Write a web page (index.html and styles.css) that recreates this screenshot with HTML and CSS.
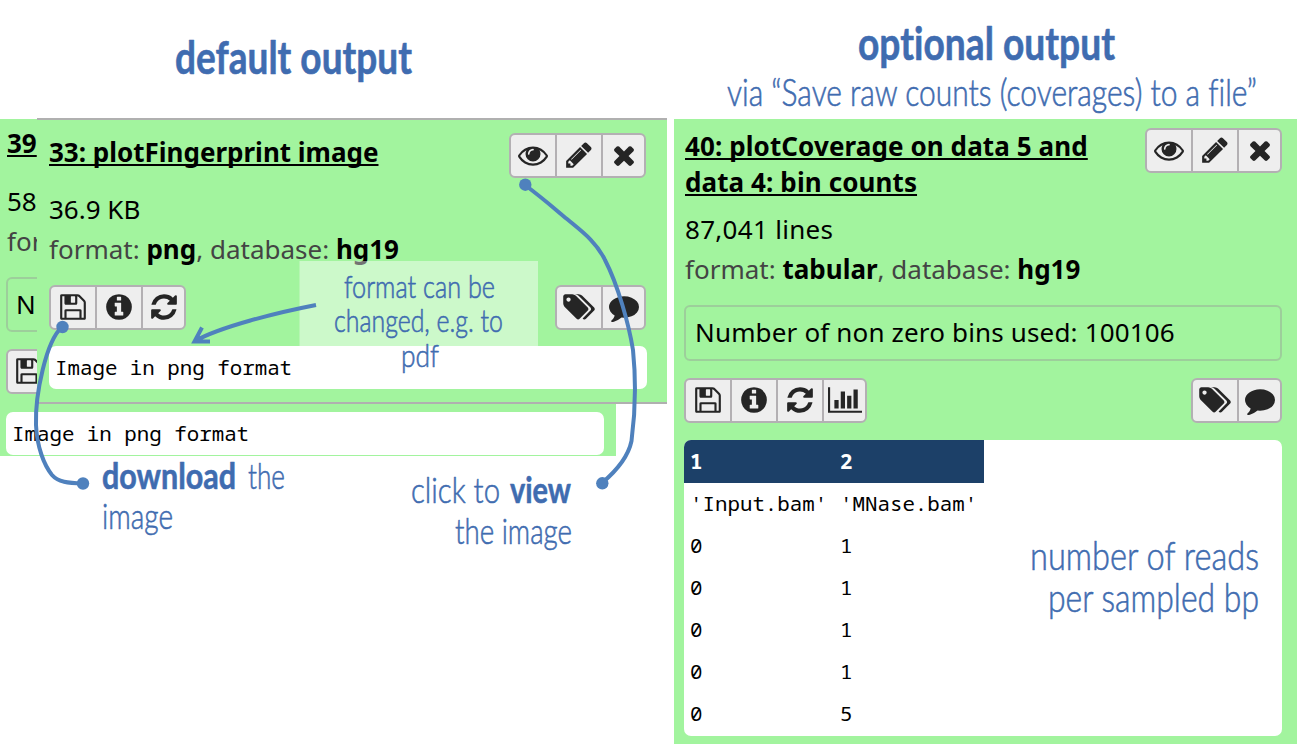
FILE: index.html
```
<!DOCTYPE html>
<html lang="en">
<head>
<meta charset="utf-8">
<title>Galaxy output</title>
<link rel="stylesheet" href="styles.css">
</head>
<body>
<svg class="defs" aria-hidden="true">
  <symbol id="eye" viewBox="0 0 1792 1792"><path d="M1664 960q-152-236-381-353 61 104 61 225 0 185-131.500 316.500t-316.500 131.500-316.500-131.500-131.500-316.500q0-121 61-225-229 117-381 353 133 205 333.500 326.500t434.500 121.500 434.500-121.500 333.500-326.500zm-720-384q0-20-14-34t-34-14q-125 0-214.500 89.500t-89.500 214.500q0 20 14 34t34 14 34-14 14-34q0-86 61-147t147-61q20 0 34-14t14-34zm848 384q0 34-20 69-140 230-376.500 368.500t-499.500 138.500-499.500-139-376.500-368q-20-35-20-69t20-69q140-229 376.500-368t499.500-139 499.500 139 376.500 368q20 35 20 69z"/></symbol>
  <symbol id="pencil" viewBox="0 0 1792 1792"><path d="M491 1536l91-91-235-235-91 91v107h128v128h107zm523-928q0-22-22-22-10 0-17 7l-542 542q-7 7-7 17 0 22 22 22 10 0 17-7l542-542q7-7 7-17zm-54-192l416 416-832 832h-416v-416zm683 96q0 53-37 90l-166 166-416-416 166-165q36-38 90-38 53 0 91 38l235 234q37 39 37 91z"/></symbol>
  <symbol id="times" viewBox="0 0 1792 1792"><path d="M1490 1322q0 40-28 68l-136 136q-28 28-68 28t-68-28l-294-294-294 294q-28 28-68 28t-68-28l-136-136q-28-28-28-68t28-68l294-294-294-294q-28-28-28-68t28-68l136-136q28-28 68-28t68 28l294 294 294-294q28-28 68-28t68 28l136 136q28 28 28 68t-28 68l-294 294 294 294q28 28 28 68z"/></symbol>
  <symbol id="save" viewBox="0 0 1792 1792"><path d="M512 1536h768v-384h-768v384zm896 0h128v-896q0-14-10-38.500t-20-34.500l-281-281q-10-10-34-20t-39-10v416q0 40-28 68t-68 28h-576q-40 0-68-28t-28-68v-416h-128v1280h128v-416q0-40 28-68t68-28h832q40 0 68 28t28 68v416zm-384-928v-320q0-13-9.500-22.500t-22.500-9.500h-192q-13 0-22.500 9.500t-9.500 22.500v320q0 13 9.500 22.500t22.500 9.500h192q13 0 22.500-9.500t9.500-22.500zm640 32v928q0 40-28 68t-68 28h-1344q-40 0-68-28t-28-68v-1344q0-40 28-68t68-28h928q40 0 88 20t76 48l280 280q28 28 48 76t20 88z"/></symbol>
  <symbol id="info" viewBox="0 0 1792 1792"><path d="M1152 1376v-160q0-14-9-23t-23-9h-96v-512q0-14-9-23t-23-9h-320q-14 0-23 9t-9 23v160q0 14 9 23t23 9h96v320h-96q-14 0-23 9t-9 23v160q0 14 9 23t23 9h448q14 0 23-9t9-23zm-128-896v-160q0-14-9-23t-23-9h-192q-14 0-23 9t-9 23v160q0 14 9 23t23 9h192q14 0 23-9t9-23zm640 416q0 209-103 385.500t-279.500 279.500-385.500 103-385.500-103-279.500-279.500-103-385.500 103-385.500 279.500-279.500 385.500-103 385.500 103 279.500 279.500 103 385.500z"/></symbol>
  <symbol id="refresh" viewBox="0 0 1792 1792"><path d="M1639 1056q0 5-1 7-64 268-268 434.500t-478 166.500q-146 0-282.500-55t-243.500-157l-129 129q-19 19-45 19t-45-19-19-45v-448q0-26 19-45t45-19h448q26 0 45 19t19 45-19 45l-137 137q71 66 161 102t187 36q134 0 250-65t186-179q11-17 53-117 8-23 30-23h192q13 0 22.500 9.500t9.500 22.500zm25-800v448q0 26-19 45t-45 19h-448q-26 0-45-19t-19-45 19-45l138-138q-148-137-349-137-134 0-250 65t-186 179q-11 17-53 117-8 23-30 23h-199q-13 0-22.500-9.500t-9.500-22.500v-7q65-268 270-434.500t480-166.500q146 0 284 55.500t245 156.500l130-129q19-19 45-19t45 19 19 45z"/></symbol>
  <symbol id="chart" viewBox="0 0 2048 1792"><path d="M640 896v512h-256v-512h256zm384-512v1024h-256v-1024h256zm1024 1152v128h-2048v-1536h128v1408h1920zm-640-896v768h-256v-768h256zm384-384v1152h-256v-1152h256z"/></symbol>
  <symbol id="tags" viewBox="54 0 2048 1792"><path d="M576 448q0-53-37.500-90.500t-90.500-37.500-90.500 37.500-37.500 90.500 37.500 90.500 90.500 37.500 90.500-37.500 37.500-90.500zm1067 576q0 53-37 90l-491 492q-39 37-91 37-53 0-90-37l-715-716q-38-37-64.500-101t-26.500-117v-416q0-52 38-90t90-38h416q53 0 117 26.500t102 64.500l715 714q37 39 37 91zm384 0q0 53-37 90l-491 492q-39 37-91 37-36 0-59-14t-53-45l470-470q37-37 37-90 0-52-37-91l-715-714q-38-38-102-64.500t-117-26.500h224q53 0 117 26.500t102 64.500l715 714q37 39 37 91z"/></symbol>
  <symbol id="comment" viewBox="0 0 1792 1792"><path d="M1792 896q0 174-120 321.500t-326 233-450 85.500q-70 0-145-8-198 175-460 242-49 14-114 22-17 2-30.500-9t-17.500-29v-1q-3-4-.5-12t2-10 4.500-9.500l6-9 7-8.500 8-9q7-8 31-34.500t34.500-38 31-39.500 32.500-51 27-59 26-76q-157-89-247.500-220t-90.500-281q0-130 71-248.500t191-204.500 286-136.500 348-50.500q244 0 450 85.500t326 233 120 321.500z"/></symbol>
</svg>

<main class="stage">
  <section class="column">
    <header class="heading">
      <svg class="note" width="667" height="118"><text class="strong" x="175" y="73.500" font-size="46" textLength="237" lengthAdjust="spacingAndGlyphs">default output</text></svg>
    </header>
    <div class="stack">
      <article class="card back">
        <h2 class="title">39</h2>
        <p class="line size">58</p>
        <p class="line meta">for</p>
        <div class="peek">N</div>
        <div class="tools">
          <div class="group"><span class="btn"><svg class="icon"><use href="#save"/></svg></span></div>
        </div>
        <pre class="output">Image in png format</pre>
      </article>
      <article class="card front">
        <div class="top">
          <h2 class="title">33: plotFingerprint image</h2>
          <div class="group">
            <span class="btn"><svg class="icon"><use href="#eye"/></svg></span>
            <span class="btn"><svg class="icon"><use href="#pencil"/></svg></span>
            <span class="btn"><svg class="icon"><use href="#times"/></svg></span>
          </div>
        </div>
        <p class="line size">36.9 KB</p>
        <p class="line meta">format: <b>png</b>, database: <b>hg19</b></p>
        <div class="tools">
          <div class="group">
            <span class="btn"><svg class="icon"><use href="#save"/></svg></span>
            <span class="btn"><svg class="icon"><use href="#info"/></svg></span>
            <span class="btn"><svg class="icon"><use href="#refresh"/></svg></span>
          </div>
          <div class="group">
            <span class="btn"><svg class="icon wide"><use href="#tags"/></svg></span>
            <span class="btn"><svg class="icon"><use href="#comment"/></svg></span>
          </div>
        </div>
        <pre class="output">Image in png format</pre>
      </article>
    </div>
  </section>

  <section class="column">
    <header class="heading">
      <svg class="note" width="623" height="119">
        <text class="strong" x="184" y="60" font-size="46" textLength="257" lengthAdjust="spacingAndGlyphs">optional output</text>
        <text x="53" y="106" font-size="37" textLength="530" lengthAdjust="spacingAndGlyphs">via “Save raw counts (coverages) to a file”</text>
      </svg>
    </header>
    <article class="card main">
      <div class="top">
        <h2 class="title spaced">40: plotCoverage on data 5 and<br>data 4: bin counts</h2>
        <div class="group">
          <span class="btn"><svg class="icon"><use href="#eye"/></svg></span>
          <span class="btn"><svg class="icon"><use href="#pencil"/></svg></span>
          <span class="btn"><svg class="icon"><use href="#times"/></svg></span>
        </div>
      </div>
      <p class="line size count">87,041 lines</p>
      <p class="line meta">format: <b>tabular</b>, database: <b>hg19</b></p>
      <div class="info">Number of non zero bins used: 100106</div>
      <div class="tools">
        <div class="group">
          <span class="btn"><svg class="icon"><use href="#save"/></svg></span>
          <span class="btn"><svg class="icon"><use href="#info"/></svg></span>
          <span class="btn"><svg class="icon"><use href="#refresh"/></svg></span>
          <span class="btn"><svg class="icon wide"><use href="#chart"/></svg></span>
        </div>
        <div class="group">
          <span class="btn"><svg class="icon wide"><use href="#tags"/></svg></span>
          <span class="btn"><svg class="icon"><use href="#comment"/></svg></span>
        </div>
      </div>
      <div class="sheet">
        <div class="row head"><span>1</span><span>2</span></div>
        <div class="row names"><span>'Input.bam'</span><span>'MNase.bam'</span></div>
        <div class="row"><span>0</span><span>1</span></div>
        <div class="row"><span>0</span><span>1</span></div>
        <div class="row"><span>0</span><span>1</span></div>
        <div class="row"><span>0</span><span>1</span></div>
        <div class="row"><span>0</span><span>5</span></div>
      </div>
    </article>
  </section>

  <svg class="note overlay" width="1297" height="745">
    <rect class="veil" x="299.500" y="261" width="238.500" height="85"/>
    <g font-size="31">
      <text x="344" y="298" textLength="151" lengthAdjust="spacingAndGlyphs">format can be</text>
      <text x="334" y="332" textLength="169" lengthAdjust="spacingAndGlyphs">changed, e.g. to</text>
      <text x="401" y="367" textLength="38" lengthAdjust="spacingAndGlyphs">pdf</text>
    </g>
    <g font-size="36">
      <text class="strong" x="102" y="489" textLength="134" lengthAdjust="spacingAndGlyphs">download</text>
      <text x="248" y="489" textLength="37" lengthAdjust="spacingAndGlyphs">the</text>
      <text x="102" y="529" textLength="71" lengthAdjust="spacingAndGlyphs">image</text>
      <text x="411" y="503" textLength="89" lengthAdjust="spacingAndGlyphs">click to</text>
      <text class="strong" x="510" y="503" textLength="61" lengthAdjust="spacingAndGlyphs">view</text>
      <text x="455" y="543.500" textLength="117" lengthAdjust="spacingAndGlyphs">the image</text>
    </g>
    <g font-size="40">
      <text x="1030" y="570" textLength="229" lengthAdjust="spacingAndGlyphs">number of reads</text>
      <text x="1048" y="612" textLength="211" lengthAdjust="spacingAndGlyphs">per sampled bp</text>
    </g>
    <g class="wire">
      <path d="M62 327C46 341 35 395 36 425C37 447 44 465 52 475C58 482 68 483 83 483.500"/>
      <path d="M525 185C545 200 556 210 567 219C580 230 596 241 605 260C618 285 629 325 633 350C636 380 635 415 631.500 441C628 458 615 472 602 483"/>
      <path d="M316 305C275 313 220 327 195 341M202 327.500L194.500 341.500L210 341.500"/>
    </g>
    <g class="dot">
      <circle cx="62.500" cy="327" r="6.200"/>
      <circle cx="83" cy="483.500" r="6.200"/>
      <circle cx="525.300" cy="184.700" r="6.200"/>
      <circle cx="602.300" cy="483.300" r="6.200"/>
    </g>
  </svg>
</main>
</body>
</html>
```
FILE: styles.css
```
* { box-sizing: border-box; }

body {
  margin: 0;
  background: #fff;
  color: #000;
  font: 26px/40px "Noto Sans", "Open Sans", sans-serif;
}

h2, p, pre { margin: 0; }

.defs { position: absolute; width: 0; height: 0; }

.stage {
  position: relative;
  display: grid;
  grid-template-columns: 667px 623px;
  column-gap: 7px;
  width: 1297px;
  height: 745px;
  overflow: hidden;
}

.heading { height: 119px; }
.heading svg { display: block; }

/* handwritten-style annotations */
.note {
  fill: #3f6cb0;
  font-family: Lato, sans-serif;
  font-weight: 300;
  font-variant-ligatures: none;
}
.note text { stroke: #3f6cb0; stroke-width: 0.600px; stroke-linejoin: round; }
.note .strong { font-weight: 700; }

.overlay { position: absolute; left: 0; top: 0; }
.veil { fill: #fff; fill-opacity: 0.45; }
.wire { fill: none; stroke: #4f81bd; stroke-width: 4; }
.dot { fill: #4f81bd; }

/* dataset cards */
.card { background: #a2f49e; }

.stack { position: relative; }

.back {
  width: 616px;
  height: 337px;
  padding: 6px 12px 0 6px;
}
.back .size { margin-top: 20px; }
.back .title, .back .line { padding-left: 1px; }

.peek {
  width: 80px;
  height: 55px;
  margin-top: 16px;
  padding-left: 8px;
  border: 2px solid rgba(150, 150, 150, 0.4);
  border-radius: 6px;
  line-height: 51px;
}
.back .tools { margin-top: 17px; }
.back .output { margin-top: 18px; line-height: 42px; }

.front {
  position: absolute;
  left: 37px;
  top: -1px;
  width: 630px;
  height: 286px;
  padding: 13px 20px 0 12px;
  border: solid #b0b0b0;
  border-width: 2px 0;
}
.front .top { height: 56px; margin-right: 1px; }
.front .title { margin-top: 1px; }
.front .tools { margin: 16px 1px 0 0; }

.top, .tools {
  display: flex;
  justify-content: space-between;
  align-items: flex-start;
}

.title {
  font-size: 26px;
  line-height: 36px;
  font-weight: 700;
  text-decoration: underline;
  text-decoration-thickness: 1.500px;
  text-underline-offset: 2px;
  text-decoration-skip-ink: none;
}
.title.spaced { letter-spacing: 0.1px; }

.meta { color: #444; }
.meta b { color: #000; }

.group {
  display: flex;
  height: 45px;
  background: #eee;
  border: 2px solid #b3b0b3;
  border-radius: 6px;
}
.btn {
  display: flex;
  justify-content: center;
  align-items: center;
  width: 46px;
  padding-bottom: 2px;
  border-right: 2px solid #b3b0b3;
}
.btn:last-child { width: 41px; border-right: 0; }
.icon { width: 30px; height: 30px; fill: #252525; flex: none; }
.icon.wide { width: 34px; }

.output {
  height: 43px;
  margin-top: 16px;
  padding-left: 6px;
  background: #fff;
  border-radius: 7px;
  font: 20.800px/43px "Noto Sans Mono", "DejaVu Sans Mono", monospace;
}

.main {
  height: 625px;
  padding: 9px 15px 0 10px;
}
.main .title { padding-left: 1px; }
.main .line { padding-left: 1px; }
.main .count { margin-top: 9px; letter-spacing: 0.300px; }

.info {
  height: 56px;
  margin-top: 16px;
  padding-left: 9px;
  border: 2px solid rgba(150, 150, 150, 0.4);
  border-radius: 6px;
  line-height: 51px;
  letter-spacing: 0.160px;
}
.main .tools { margin-top: 17px; }

.sheet {
  height: 296px;
  margin-top: 17px;
  overflow: hidden;
  background: #fff;
  border-radius: 7px;
  font: 20.800px/40px "Noto Sans Mono", "DejaVu Sans Mono", monospace;
}
.row {
  display: grid;
  grid-template-columns: 150px 150px;
  width: 300px;
  height: 42.200px;
}
.row span { padding-left: 6px; }
.head {
  height: 42.500px;
  background: #1c4068;
  color: #fff;
  font-weight: 700;
  line-height: 42px;
}
```
